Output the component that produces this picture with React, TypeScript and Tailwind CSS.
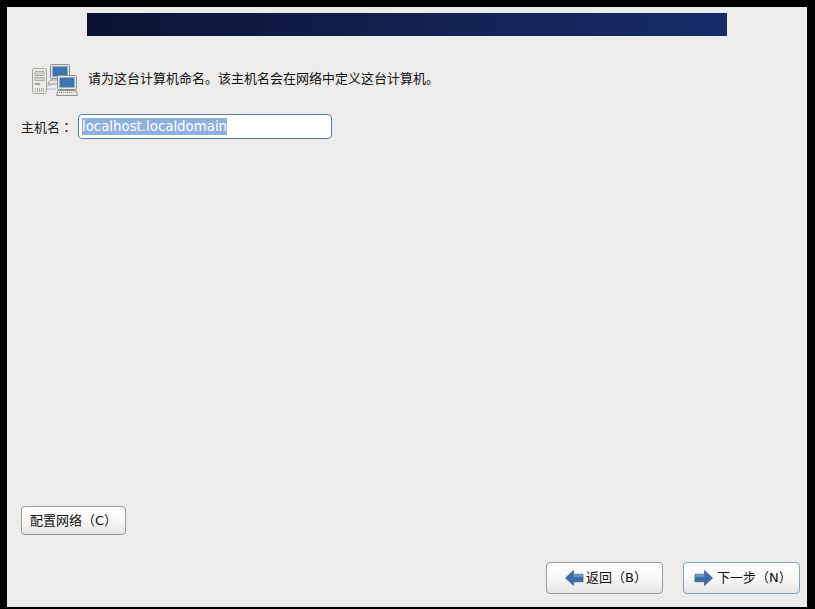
export default function App() {
  const latin = "font-['DejaVu_Sans','Noto_Sans_CJK_SC',sans-serif]";
  const btn =
    "rounded-[4px] border flex items-center bg-gradient-to-b from-white via-[#f8f8f7] to-[#e6e5e3] text-[13px] leading-none text-[#111]";
  return (
    <div className={`w-[815px] h-[609px] bg-black pt-[7px] pl-[7px] ${latin}`}>
      <div className="w-[800px] h-[600px] bg-[#edeceb] flex flex-col">
        <div className="pt-[6px] pl-[80px]">
          <div className="w-[640px] h-[23px] bg-gradient-to-r from-[#0a1233] via-[#12214f] to-[#162b68]" />
        </div>
        <div className="flex items-center mt-[28px] pl-[24px] h-[32px]">
          <svg width="47" height="32" viewBox="0 0 47 32" className="shrink-0">
            <rect x="1.5" y="4.5" width="14" height="25" rx="2" fill="#e9e9e6" stroke="#a3a5a1" />
            <rect x="4" y="7.5" width="9" height="4" fill="#d3d4d0" stroke="#9a9c98" strokeWidth="0.7" />
            <rect x="4" y="13.5" width="9" height="3" fill="#d3d4d0" stroke="#9a9c98" strokeWidth="0.7" />
            <rect x="4" y="19" width="5" height="2" fill="#a3a5a1" />
            <path d="M4.5 24v4M6.5 24v4M8.5 24v4M10.5 24v4M12.5 24v4" stroke="#b0b2ae" />
            <path d="M16 22l9-3M16 25h9" stroke="#9dbbdd" strokeWidth="1.2" />
            <rect x="19.5" y="0.5" width="19" height="14" rx="1" fill="#e3e4e0" stroke="#8f918d" />
            <rect x="21.5" y="2.5" width="15" height="10" fill="#3f75ad" />
            <path d="M19 16h9v4H17z" fill="#e6e6e2" stroke="#9a9c98" />
            <rect x="26.5" y="11.5" width="19" height="14" rx="1" fill="#e6e7e3" stroke="#8f918d" />
            <rect x="28.5" y="13.5" width="15" height="10" fill="#3e76b2" />
            <path d="M27 26.5h18l1.5 5h-21z" fill="#ebebe7" stroke="#90928e" />
            <path d="M28 28.5h16" stroke="#8f918d" strokeDasharray="1 1" />
          </svg>
          <span className="ml-[10px] mb-[4px] text-[13px] text-[#111] leading-none whitespace-nowrap">
            请为这台计算机命名。该主机名会在网络中定义这台计算机。
          </span>
        </div>
        <div className="flex items-center mt-[18px] pl-[14px]">
          <span className="w-[57px] text-[13px] leading-none text-[#222] whitespace-nowrap">
            主机名<span className="font-['Noto_Sans_CJK_TC',sans-serif]">：</span>
          </span>
          <div className="w-[254px] h-[25px] rounded-[4px] border border-[#4f7cb3] bg-white flex items-center pl-[3px]">
            <span className="bg-[#8fb1dd] text-white text-[13.33px] leading-[17px]">
              localhost.localdomain
            </span>
          </div>
        </div>
        <div className="flex-1" />
        <div className="pl-[14px]">
          <button className={`${btn} w-[105px] h-[29px] border-[#9b9b98] pl-[8px] pb-[1px]`}>
            配置网络（C）
          </button>
        </div>
        <div className="flex justify-end gap-[20px] pr-[7px] mt-[27px] mb-[13px]">
          <button className={`${btn} w-[117px] h-[32px] border-[#9b9b98] pl-[18px] pb-[2px]`}>
            <svg width="19" height="20" viewBox="0 0 20 20" className="mr-[2px] mt-[2px]">
              <path d="M0.5 10 9 2v4h10v8H9v4z" fill="#3d6ca8" stroke="#2c5488" strokeWidth="0.7" />
              <path d="M9 6h10v3H9z" fill="#6f96c6" />
            </svg>
            返回（B）
          </button>
          <button className={`${btn} w-[117px] h-[32px] border-[#7ba0cc] pl-[10px] pb-[2px]`}>
            <svg width="19" height="20" viewBox="0 0 20 20" className="mr-[4px] mt-[2px]">
              <path d="M19.5 10 11 2v4H1v8h10v4z" fill="#3d6ca8" stroke="#2c5488" strokeWidth="0.7" />
              <path d="M1 6h10v3H1z" fill="#6f96c6" />
            </svg>
            下一步（N）
          </button>
        </div>
      </div>
    </div>
  );
}
